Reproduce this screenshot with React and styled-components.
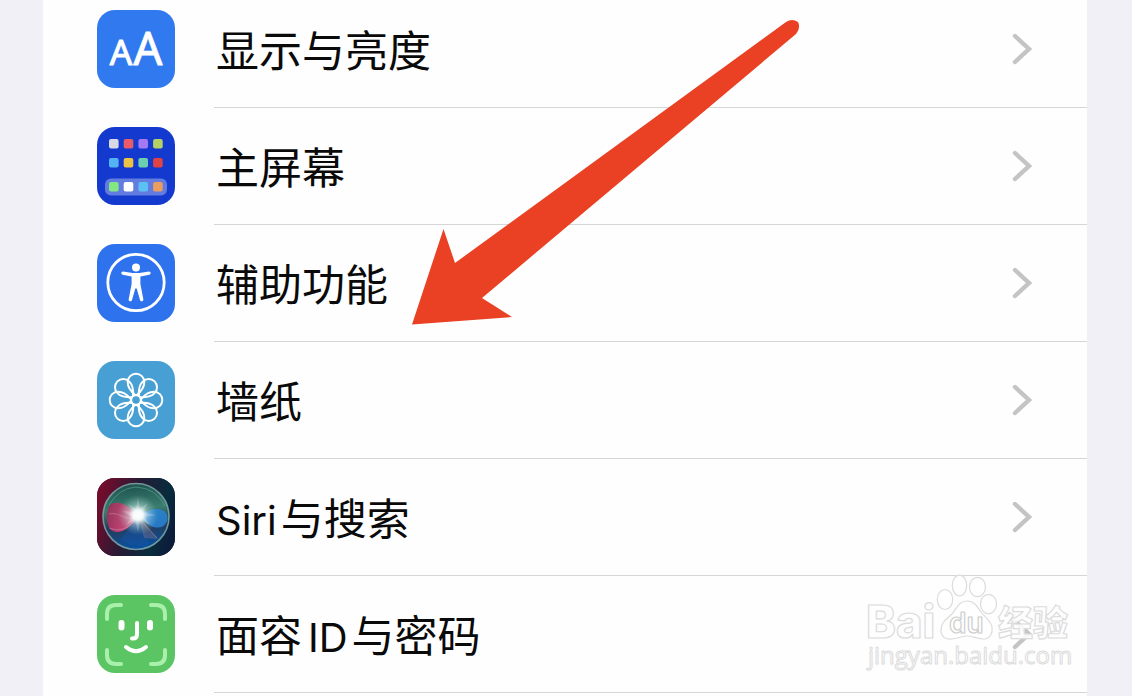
import React from "react";
import styled, { createGlobalStyle } from "styled-components";

const GlobalStyle = createGlobalStyle`
  * {
    box-sizing: border-box;
  }
  body {
    margin: 0;
    background-color: #f1f0f6;
    font-family: Inter, "Noto Sans CJK SC", sans-serif;
  }
`;

const Page = styled.main`
  position: relative;
  min-height: 100vh;
  padding: 0 45px 0 43px;
`;

const List = styled.ul`
  min-height: 100vh;
  margin: 0;
  padding: 0;
  list-style: none;
  background-color: #fefefe;
`;

const Row = styled.li`
  &:first-child a {
    padding-top: 10px;
  }
`;

const RowLink = styled.a`
  display: flex;
  padding: 19px 0 0 54px;
  color: #0a0a0a;
  text-decoration: none;
`;

const Tile = styled.span`
  display: block;
  flex: none;
  width: 78px;
  height: 78px;
  margin-right: 39px;
  border-radius: 18px;
  overflow: hidden;
  background-color: ${(props) => props.$color};
`;

const Body = styled.span`
  display: flex;
  flex: 1;
  justify-content: space-between;
  align-items: center;
  padding: 0 55px 19px 2px;
  border-bottom: 1px solid #d6d6d8;
`;

const Label = styled.span`
  padding-top: 4px;
  font-size: 43px;
  line-height: 74px;
  white-space: nowrap;
`;

const Latin = styled.span`
  margin-left: ${(props) => (props.$start ? "6px" : "0")};
  margin-right: 4px;
  font-size: 40px;
  line-height: 40px;
`;

const Drawing = styled.svg`
  display: block;
  width: 78px;
  height: 78px;
`;

const ChevronIcon = styled.svg`
  flex: none;
  width: 20px;
  height: 32px;
`;

const Arrow = styled.svg`
  position: absolute;
  top: 0;
  left: 400px;
  width: 410px;
  height: 340px;
  pointer-events: none;
`;

const Watermark = styled.div`
  position: absolute;
  top: 572px;
  right: 60px;
  width: 206px;
  pointer-events: none;
`;

const WatermarkArt = styled.svg`
  display: block;
  width: 206px;
  height: 104px;
`;

const Chevron = () => (
  <ChevronIcon viewBox="0 0 20 32" fill="none" aria-hidden="true">
    <path
      d="M3 3L17 16L3 29"
      stroke="#c4c4c6"
      strokeWidth="4.4"
      strokeLinecap="round"
      strokeLinejoin="miter"
    />
  </ChevronIcon>
);

const DisplayIcon = () => (
  <Drawing viewBox="0 0 78 78">
    <g
      fill="#fff"
      stroke="#fff"
      strokeWidth="1"
      strokeLinejoin="round"
      fontFamily="Noto Sans, sans-serif"
      textAnchor="middle"
    >
      <text x="24" y="55" fontSize="35">
        A
      </text>
      <text x="51" y="55" fontSize="45">
        A
      </text>
    </g>
  </Drawing>
);

const apps = [
  ["#d8d9e2", "#e95b68", "#a47af4", "#b5d364"],
  ["#54b4f3", "#edc344", "#6bcfb0", "#e04343"],
  ["#83e883", "#ffffff", "#5cc0f5", "#eb9d60"],
];

const HomeIcon = () => (
  <Drawing viewBox="0 0 78 78">
    <rect x="8" y="51.5" width="62" height="17" rx="6" fill="#627ce0" />
    {apps.map((line, row) =>
      line.map((color, col) => (
        <rect
          key={color}
          x={12 + col * 14.7}
          y={[12, 31, 55][row]}
          width="9.6"
          height="9.6"
          rx="2"
          fill={color}
        />
      ))
    )}
  </Drawing>
);

const AccessibilityIcon = () => (
  <Drawing viewBox="0 0 78 78">
    <circle cx="39" cy="38.5" r="28.2" fill="none" stroke="#fff" strokeWidth="2.8" />
    <circle cx="39" cy="23.5" r="4" fill="#fff" />
    <path
      d="M26 27.4L35.5 29H42.5L52 27.4Q53.6 27.5 53.7 29Q53.7 30.3 52.4 30.7L43.4 32.5V40L46.4 55.5Q46.4 57.3 44.8 57.4Q43.5 57.4 43 56L39.7 44.5H38.3L35 56Q34.5 57.4 33.2 57.4Q31.6 57.3 31.6 55.5L34.6 40V32.5L25.6 30.7Q24.3 30.3 24.3 29Q24.4 27.5 26 27.4Z"
      fill="#fff"
    />
  </Drawing>
);

const WallpaperIcon = () => (
  <Drawing viewBox="0 0 78 78">
    <g fill="none" stroke="#fff" strokeWidth="2" strokeLinejoin="round">
      {[0, 45, 90, 135, 180, 225, 270, 315].map((angle) => (
        <path
          key={angle}
          transform={`rotate(${angle} 39 39)`}
          d="M38.5 34.2C34.500 31 30.7 26 30.7 21A8.3 8.3 0 0 1 47.3 21C47.3 26 43.500 31 39.5 34.2"
        />
      ))}
      <circle cx="39" cy="39" r="4.8" />
    </g>
  </Drawing>
);

const SiriIcon = () => (
  <Drawing viewBox="0 0 78 78">
    <defs>
      <linearGradient id="siriBack" x1="0" y1="0.3" x2="1" y2="0.6">
        <stop offset="0" stopColor="#760c2c" />
        <stop offset="0.45" stopColor="#251b35" />
        <stop offset="0.8" stopColor="#082c3c" />
        <stop offset="1" stopColor="#0c1d3c" />
      </linearGradient>
      <linearGradient id="siriOrb" x1="0.3" y1="0" x2="0.4" y2="1">
        <stop offset="0" stopColor="#1c4f4c" />
        <stop offset="0.4" stopColor="#3b7d70" />
        <stop offset="0.65" stopColor="#263c58" />
        <stop offset="1" stopColor="#0752a1" />
      </linearGradient>
      <linearGradient id="siriPink" x1="0" y1="0" x2="1" y2="0.3">
        <stop offset="0" stopColor="#9e2452" />
        <stop offset="1" stopColor="#f45587" />
      </linearGradient>
      <radialGradient id="siriGlow">
        <stop offset="0" stopColor="#fff" />
        <stop offset="0.25" stopColor="#f8ffff" stopOpacity="0.95" />
        <stop offset="0.5" stopColor="#d8eff0" stopOpacity="0.45" />
        <stop offset="1" stopColor="#8fd6cf" stopOpacity="0" />
      </radialGradient>
    </defs>
    <rect width="78" height="78" fill="url(#siriBack)" />
    <circle cx="39" cy="38.5" r="33" fill="url(#siriOrb)" />
    <path
      d="M41 38C32 27 23 22 14 26C8 31 9 47 14 52C23 58 33 50 41 38Z"
      fill="url(#siriPink)"
      opacity="0.85"
    />
    <path
      d="M41 38C49 33 60 28 67 33C73 37 71 47 64 49C54 52 49 43 41 38Z"
      fill="#2884d7"
      opacity="0.85"
    />
    <path d="M41 39L23 62Q39 72 53 66Z" fill="#1551a5" opacity="0.5" />
    <path d="M42 40L47 60L61 61Z" fill="#8f7f9c" opacity="0.35" />
    <path
      d="M12 36C23 33 28 45 41 39M12 50Q28 57 41 39M42 40L60 60"
      fill="none"
      stroke="#db94b7"
      strokeWidth="0.8"
      opacity="0.6"
    />
    <circle cx="41" cy="37" r="20" fill="url(#siriGlow)" />
    <path
      d="M41 19L42.5 31L51 25L46 34L59 37L47 39L53 47L43 42L41 54L38 42L29 47L35 39L26 33L36 34L31 26L39 31Z"
      fill="#fff"
      opacity="0.22"
    />
    <circle
      cx="39"
      cy="38.5"
      r="33"
      fill="none"
      stroke="#80a8ac"
      strokeWidth="1.6"
      opacity="0.85"
    />
    <path
      d="M12 27Q22 10 39 9Q59 10 68 28"
      fill="none"
      stroke="#5fac93"
      strokeWidth="1"
      opacity="0.6"
    />
  </Drawing>
);

const FaceIcon = () => (
  <Drawing viewBox="0 0 78 78" fill="none" strokeLinecap="round">
    <path
      d="M10 24V19Q10 10 19 10H24M54 10H59Q68 10 68 19V24M68 55V60Q68 69 59 69H54M24 69H19Q10 69 10 60V55"
      stroke="#a9f0ab"
      strokeWidth="4"
    />
    <path d="M24.5 28V32.5M53 28V32.5" stroke="#fff" strokeWidth="6" />
    <path d="M40 28V39.5Q40 43.5 36 43.5H35" stroke="#fff" strokeWidth="4" />
    <path d="M29 52Q39 60.5 49 52" stroke="#fff" strokeWidth="4" />
  </Drawing>
);

const items = [
  { id: "display", color: "#3179ef", icon: DisplayIcon, label: "显示与亮度" },
  { id: "home", color: "#1439cf", icon: HomeIcon, label: "主屏幕" },
  {
    id: "accessibility",
    color: "#2e73ed",
    icon: AccessibilityIcon,
    label: "辅助功能",
  },
  { id: "wallpaper", color: "#479fd3", icon: WallpaperIcon, label: "墙纸" },
  {
    id: "siri",
    color: "#251b35",
    icon: SiriIcon,
    label: (
      <>
        <Latin>Siri</Latin>与搜索
      </>
    ),
  },
  {
    id: "face",
    color: "#5bc564",
    icon: FaceIcon,
    label: (
      <>
        面容
        <Latin $start>ID</Latin>
        与密码
      </>
    ),
  },
];

const SettingsRow = ({ item }) => {
  const Icon = item.icon;
  return (
    <Row>
      <RowLink href={`#${item.id}`}>
        <Tile $color={item.color}>
          <Icon />
        </Tile>
        <Body>
          <Label>{item.label}</Label>
          <Chevron />
        </Body>
      </RowLink>
    </Row>
  );
};

const BaiduMark = () => (
  <Watermark>
    <WatermarkArt viewBox="0 0 206 104">
      <g
        fill="#fff"
        stroke="#dcdcdc"
        strokeWidth="1.2"
        strokeLinejoin="round"
        fillOpacity="0.9"
      >
        <text
          x="0"
          y="66"
          fontFamily="Inter, sans-serif"
          fontWeight="800"
          fontSize="45"
        >
          Bai
        </text>
        <ellipse cx="79" cy="27.5" rx="7.7" ry="10" />
        <ellipse cx="93.5" cy="13.5" rx="7.2" ry="10.3" />
        <ellipse cx="111.5" cy="15" rx="8" ry="9.7" />
        <ellipse cx="122.5" cy="32" rx="8" ry="9.7" />
        <path d="M101 29C93 29 91 36 86 42C81 47 75 50 75 58C75 65 80 68 86 67C93 66 97 64 101 64C107 64 111 67 118 67C124 67 127 61 126 55C125 49 119 45 115 40C111 34 108 29 101 29Z" />
        <text
          x="83"
          y="61"
          fontFamily="Inter, sans-serif"
          fontWeight="600"
          fontSize="28"
          stroke="#cecece"
        >
          du
        </text>
        <text
          x="132"
          y="64"
          fontFamily="Noto Sans CJK SC, sans-serif"
          fontWeight="900"
          fontSize="35"
        >
          经验
        </text>
        <text
          x="2"
          y="92"
          fontFamily="Open Sans, sans-serif"
          fontSize="24"
          strokeWidth="1"
        >
          jingyan.baidu.com
        </text>
      </g>
    </WatermarkArt>
  </Watermark>
);

const App = () => {
  return (
    <>
      <GlobalStyle />
      <Page>
        <List>
          {items.map((item) => (
            <SettingsRow key={item.id} item={item} />
          ))}
        </List>
        <Arrow viewBox="0 0 410 340" aria-hidden="true">
          <path
            d="M12 324.5L43.5 229L55 263L386 22Q392 18 398 22Q401 28 396 34L82 298L112 317Z"
            fill="#ea4125"
          />
        </Arrow>
        <BaiduMark />
      </Page>
    </>
  );
};

export default App;
